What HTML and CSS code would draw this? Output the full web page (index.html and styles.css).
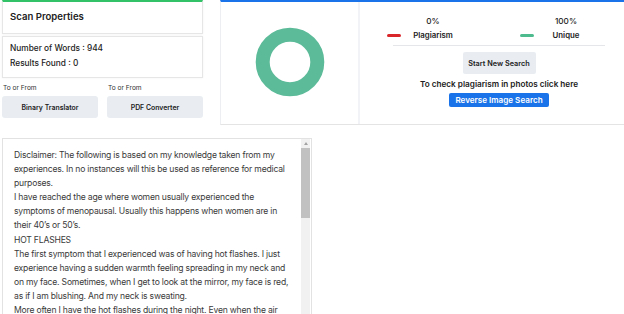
FILE: index.html
```html
<!DOCTYPE html>
<html>
<head>
<meta charset="utf-8">
<link rel="stylesheet" href="styles.css">
</head>
<body>
<div class="top">
  <div class="left">
    <div class="box title-box"><h2 class="title">Scan Properties</h2></div>
    <div class="box stats-box">
      <p class="stat-line">Number of Words : 944</p>
      <p class="stat-line">Results Found : 0</p>
    </div>
    <div class="tools">
      <div class="tool">
        <span class="tool-label">To or From</span>
        <button class="tool-btn">Binary Translator</button>
      </div>
      <div class="tool">
        <span class="tool-label">To or From</span>
        <button class="tool-btn">PDF Converter</button>
      </div>
    </div>
  </div>
  <div class="card">
    <div class="chart-pane">
      <svg class="donut" width="70" height="70" viewBox="0 0 70 70">
        <circle cx="35" cy="35" r="27.3" fill="none" stroke="#5cbb99" stroke-width="14"/>
      </svg>
    </div>
    <div class="result-pane">
      <div class="legend">
        <div class="legend-item">
          <span class="dash dash-red"></span>
          <div class="legend-text"><span class="pct">0%</span><span class="lbl">Plagiarism</span></div>
        </div>
        <div class="legend-item">
          <span class="dash dash-green"></span>
          <div class="legend-text"><span class="pct">100%</span><span class="lbl">Unique</span></div>
        </div>
      </div>
      <hr class="sep">
      <button class="new-search">Start New Search</button>
      <p class="photo-note">To check plagiarism in photos click here</p>
      <button class="reverse-btn">Reverse Image Search</button>
    </div>
  </div>
</div>
<div class="textbox">
  <div class="text">
    <p>Disclaimer: The following is based on my knowledge taken from my experiences. In no instances will this be used as reference for medical purposes.</p>
    <p>I have reached the age where women usually experienced the symptoms of menopausal. Usually this happens when women are in their 40’s or 50’s.</p>
    <p>HOT FLASHES</p>
    <p>The first symptom that I experienced was of having hot flashes. I just experience having a sudden warmth feeling spreading in my neck and on my face. Sometimes, when I get to look at the mirror, my face is red, as if I am blushing. And my neck is sweating.</p>
    <p>More often I have the hot flashes during the night. Even when the air</p>
  </div>
  <div class="scrollbar">
    <div class="sb-btn"><span class="sb-arrow"></span></div>
    <div class="sb-thumb"></div>
  </div>
</div>
</body>
</html>
```
FILE: styles.css
```css
* { box-sizing: border-box; }
html, body { margin: 0; padding: 0; overflow: hidden; background: #fff; }
body {
  width: 624px;
  height: 314px;
  font-family: Inter, "Open Sans", sans-serif;
  color: #333;
}
p, h2 { margin: 0; }
button { font-family: inherit; border: none; cursor: pointer; padding: 0; white-space: nowrap; }

.top { display: flex; align-items: flex-start; }

.left { width: 201px; margin-left: 2px; }
.box {
  border: 1px solid #e6e6e6;
  box-shadow: 0 0 2px rgba(0,0,0,0.06);
  background: #fff;
}
.title-box {
  height: 34px;
  border-top: 2px solid #34c268;
  padding: 8px 7px 0;
}
.title { font-size: 9.6px; font-weight: 600; color: #222; line-height: 14px; }
.stats-box {
  margin-top: 2px;
  height: 42px;
  padding: 4px 7px 0;
}
.stat-line { font-size: 8.3px; font-weight: 500; color: #222; line-height: 15px; }

.tools { display: flex; gap: 9px; margin-top: 3px; }
.tool { flex: 1; display: flex; flex-direction: column; }
.tool-label { font-size: 6.6px; color: #333; line-height: 14px; padding-left: 1px; }
.tool-btn {
  margin-top: 1px;
  height: 22px;
  background: #e9edf2;
  border-radius: 3px;
  font-size: 6.9px;
  font-weight: 600;
  color: #222;
}

.card {
  margin-left: 17px;
  flex: 1;
  height: 125px;
  display: flex;
  border-top: 2px solid #1a73e8;
  border-left: 1px solid #eceef1;
  border-bottom: 1px solid #e4e4e4;
}
.chart-pane {
  width: 139px;
  border-right: 2px solid #f1f3f6;
  display: flex;
  align-items: center;
  justify-content: center;
}
.donut { display: block; margin-top: -2px; }

.result-pane {
  flex: 1;
  padding-left: 14px;
  display: flex;
  flex-direction: column;
  align-items: center;
}
.legend { align-self: stretch; display: flex; gap: 57px; padding-left: 13px; margin-top: 12px; }
.legend-item { display: flex; align-items: flex-end; gap: 2px; }
.dash { width: 14px; height: 3px; border-radius: 2px; margin-bottom: 5px; }
.dash-red { background: #d9262b; }
.dash-green { background: #4dbb8e; }
.legend-text { width: 60px; display: flex; flex-direction: column; align-items: center; }
.pct { font-size: 8.2px; font-weight: 500; line-height: 14px; color: #222; }
.lbl { font-size: 7.8px; font-weight: 600; line-height: 14px; color: #222; }

.sep { align-self: stretch; margin: 3px 19px 0; border: none; border-top: 1px solid #e4e6e9; height: 0; }
.new-search {
  margin-top: 6px;
  width: 73px;
  height: 22px;
  background: #e9edf2;
  border-radius: 2px;
  font-size: 7.3px;
  font-weight: 600;
  color: #222;
}
.photo-note { margin-top: 3px; font-size: 8.2px; font-weight: 600; color: #222; line-height: 14px; }
.reverse-btn {
  margin-top: 2px;
  width: 100px;
  height: 14px;
  background: #1a73e8;
  border-radius: 2px;
  color: #fff;
  font-size: 8.1px;
  font-weight: 600;
}

.textbox {
  margin: 13px 0 0 2px;
  width: 310px;
  height: 177px;
  border: 1px solid #e2e2e2;
  display: flex;
}
.text {
  flex: 1;
  padding: 9px 10px 0 11px;
  font-size: 8.6px;
  letter-spacing: -0.2px;
  line-height: 14.1px;
  color: #3a3a3a;
  overflow: hidden;
}
.scrollbar {
  width: 9px;
  margin-right: 1px;
  background: #f1f1f1;
  display: flex;
  flex-direction: column;
}
.sb-btn { height: 9px; display: flex; justify-content: center; align-items: center; }
.sb-arrow {
  width: 0; height: 0;
  border-left: 2.5px solid transparent;
  border-right: 2.5px solid transparent;
  border-bottom: 3px solid #a3a3a3;
}
.sb-thumb { height: 70px; background: #c1c1c1; }
```
